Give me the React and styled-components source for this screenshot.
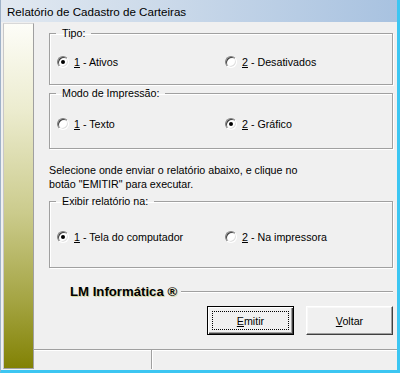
import React from "react";
import styled, { createGlobalStyle } from "styled-components";

const Global = createGlobalStyle`
  html, body { margin: 0; padding: 0; background: #f0f0f0; }
  body { font-family: "Liberation Sans", Arial, sans-serif; font-size: 10.7px; color: #000; }
`;

const Window = styled.div`
  width: 400px;
  height: 373px;
  box-sizing: border-box;
  display: flex;
  flex-direction: column;
  background: #f0f0f0;
  border-right: 3px solid #3cc6f2;
  border-bottom: 3px solid #3cc6f2;
  border-left: 1px solid #9fb2c8;
`;

const TitleBar = styled.div`
  height: 22px;
  flex: none;
  box-sizing: border-box;
  display: flex;
  align-items: center;
  padding-left: 6px;
  padding-top: 1px;
  font-size: 11.6px;
  color: #000;
  background: linear-gradient(to right, #e2e9f1 0%, #c9d8e9 45%, #a8c2e0 100%);
`;

const Body = styled.div`
  flex: 1;
  display: flex;
  min-height: 0;
  padding-bottom: 1px;
`;

const Strip = styled.div`
  width: 29px;
  margin: 1px 0 0 2px;
  border: 1px solid #a0a0a0;
  border-left-color: #c8c8c8;
  border-top-color: #d8d8d8;
  background: linear-gradient(to bottom, #fdfdf8 0%, #ececcf 25%, #cbcb8c 55%, #a5a544 80%, #828204 100%);
`;

const RightCol = styled.div`
  flex: 1;
  display: flex;
  flex-direction: column;
  min-width: 0;
`;

const Content = styled.div`
  flex: 1;
  display: flex;
  flex-direction: column;
  padding: 4px 4px 0 15px;
`;

const GroupBox = styled.fieldset`
  margin: ${p => p.$mt}px 0 0 0;
  padding: ${p => p.$pt}px 0 ${p => p.$pb}px 0;
  min-width: 0;
  border: 1px solid #a0a0a0;
  box-shadow: inset 1px 1px 0 #fff, 1px 1px 0 #fff;
`;

const Legend = styled.legend`
  margin-left: 6px;
  padding: 0 6px 0 6px;
  line-height: 13px;
  font-size: 10.7px;
`;

const RadioRow = styled.div`
  display: grid;
  grid-template-columns: 168px 1fr;
  padding-left: 7px;
  height: 16px;
  align-items: center;
`;

const RadioItem = styled.label`
  display: flex;
  align-items: center;
  gap: 5px;
  white-space: nowrap;
`;

const RadioCircle = styled.span`
  width: 12px;
  height: 12px;
  box-sizing: border-box;
  border-radius: 50%;
  border: 1px solid;
  border-color: #808080 #ffffff #ffffff #808080;
  background: #fff;
  box-shadow: inset 1px 1px 0 #404040, inset -1px -1px 0 #e0e0e0;
  display: flex;
  align-items: center;
  justify-content: center;
`;

const Dot = styled.span`
  width: 4px;
  height: 4px;
  border-radius: 50%;
  background: #000;
`;

const Key = styled.span`
  text-decoration: underline;
`;

const Instruction = styled.p`
  margin: 14px 0 0 0;
  line-height: 14px;
  font-size: 10.7px;
`;

const BrandRow = styled.div`
  margin-top: 15px;
  display: flex;
  align-items: center;
  padding-left: 21px;
  height: 16px;
`;

const Brand = styled.span`
  font-weight: bold;
  font-size: 13.2px;
  white-space: nowrap;
  text-shadow: 1px 1px 0 #d8d8a0;
`;

const BrandLine = styled.span`
  flex: 1;
  margin-left: 4px;
  height: 1px;
  background: #a0a0a0;
  box-shadow: 0 1px 0 #fff;
`;

const ButtonRow = styled.div`
  margin-top: 7px;
  display: flex;
  justify-content: flex-end;
  gap: 12px;
`;

const Button = styled.button`
  width: 87px;
  height: 29px;
  box-sizing: border-box;
  font-family: "Liberation Sans", Arial, sans-serif;
  font-size: 10.7px;
  color: #000;
  background: #f0f0f0;
  padding: 0;
  border: 1px solid;
  border-color: ${p => (p.$default ? "#000" : "#fff #404040 #404040 #fff")};
  box-shadow: ${p =>
    p.$default
      ? "inset 1px 1px 0 #fff, inset -1px -1px 0 #404040, inset -2px -2px 0 #a0a0a0"
      : "inset -1px -1px 0 #a0a0a0, inset 1px 1px 0 #f8f8f8"};
  display: flex;
  align-items: center;
  justify-content: center;
`;

const Focus = styled.span`
  width: 77px;
  height: 19px;
  box-sizing: border-box;
  border: 1px dotted #000;
  display: flex;
  align-items: center;
  justify-content: center;
`;

const StatusBar = styled.div`
  height: 19px;
  flex: none;
  display: grid;
  grid-template-columns: 118px 1fr;
  border-top: 1px solid #a0a0a0;
  box-shadow: inset 0 1px 0 #fff;
`;

const StatusPanel = styled.div`
  border-right: ${p => (p.$divider ? "1px solid #a0a0a0" : "none")};
  box-shadow: ${p => (p.$divider ? "1px 0 0 #fff" : "none")};
`;

function Radio({ checked, k, label }) {
  return (
    <RadioItem>
      <RadioCircle>{checked && <Dot />}</RadioCircle>
      <span>
        <Key>{k}</Key> - {label}
      </span>
    </RadioItem>
  );
}

export default function App() {
  return (
    <>
      <Global />
      <Window>
        <TitleBar>Relatório de Cadastro de Carteiras</TitleBar>
        <Body>
          <Strip />
          <RightCol>
            <Content>
              <GroupBox $mt={1} $pt={14} $pb={14}>
                <Legend>Tipo:</Legend>
                <RadioRow>
                  <Radio checked k="1" label="Ativos" />
                  <Radio k="2" label="Desativados" />
                </RadioRow>
              </GroupBox>
              <GroupBox $mt={2} $pt={16} $pb={16}>
                <Legend>Modo de Impressão:</Legend>
                <RadioRow>
                  <Radio k="1" label="Texto" />
                  <Radio checked k="2" label="Gráfico" />
                </RadioRow>
              </GroupBox>
              <Instruction>
                Selecione onde enviar o relatório abaixo, e clique no
                <br />
                botão "EMITIR" para executar.
              </Instruction>
              <GroupBox $mt={4} $pt={21} $pb={22}>
                <Legend>Exibir relatório na:</Legend>
                <RadioRow>
                  <Radio checked k="1" label="Tela do computador" />
                  <Radio k="2" label="Na impressora" />
                </RadioRow>
              </GroupBox>
              <BrandRow>
                <Brand>LM Informática ®</Brand>
                <BrandLine />
              </BrandRow>
              <ButtonRow>
                <Button $default>
                  <Focus>
                    <span>
                      <Key>E</Key>mitir
                    </span>
                  </Focus>
                </Button>
                <Button>
                  <span>
                    <Key>V</Key>oltar
                  </span>
                </Button>
              </ButtonRow>
            </Content>
            <StatusBar>
              <StatusPanel $divider />
              <StatusPanel />
            </StatusBar>
          </RightCol>
        </Body>
      </Window>
    </>
  );
}
